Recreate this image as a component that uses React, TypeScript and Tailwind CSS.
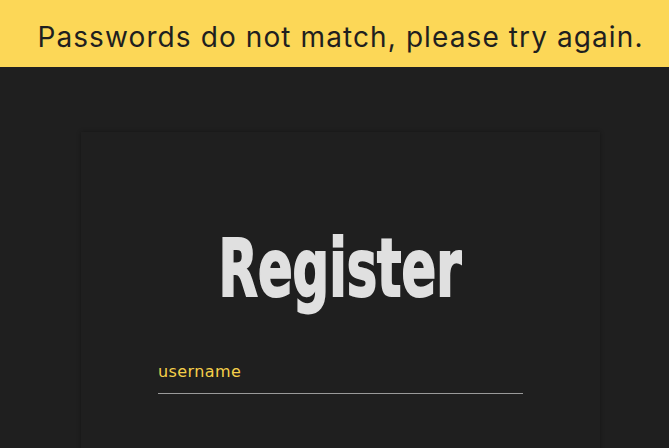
export default function App() {
  return (
    <div className="h-screen bg-[#1f1f1f] overflow-hidden">
      <div className="h-[67px] bg-[#fcd757] flex items-center justify-center pt-[6px] pl-[12px]">
        <p className="text-[28px] text-[#1f1f1f] font-['Inter',sans-serif] tracking-[1.1px]">
          Passwords do not match, please try again.
        </p>
      </div>

      <main className="pt-[65px] pl-[12px] flex justify-center">
        <div className="w-[519px] h-[400px] shrink-0 bg-[#1f1f1f] shadow-[0_0_4px_rgba(0,0,0,0.35)] flex flex-col items-center pt-[92px]">
          <h1 className="text-[80px] leading-[90px] font-bold text-[#e0e0e0] font-['DejaVu_Sans_Condensed',sans-serif] scale-x-[0.71] [-webkit-text-stroke:2px_#e0e0e0]">
            Register
          </h1>
          <div className="w-[365px] mt-[48px]">
            <label className="block text-[16px] text-[#f5cf4a] font-['DejaVu_Sans',sans-serif] tracking-[0.4px] leading-[20px]">
              username
            </label>
            <div className="mt-[11px] h-px bg-[#9a9a9a]" />
          </div>
        </div>
      </main>
    </div>
  );
}
